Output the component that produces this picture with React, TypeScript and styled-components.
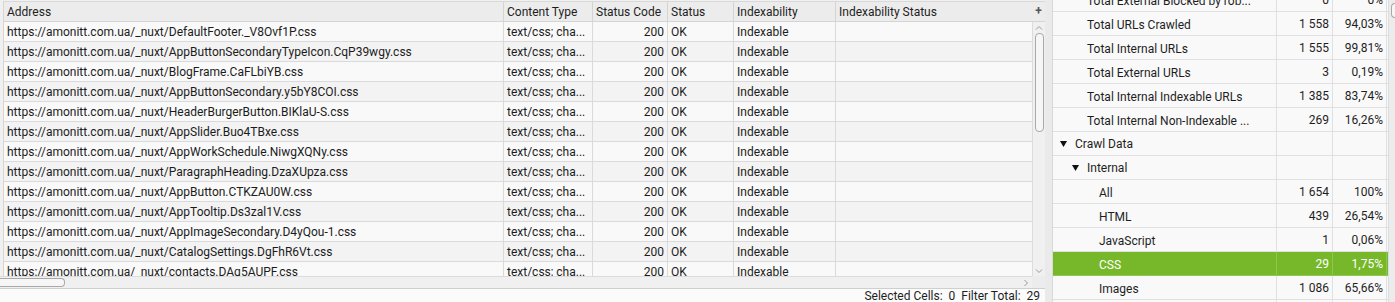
import React from "react";
import styled, { createGlobalStyle } from "styled-components";

const GlobalStyle = createGlobalStyle`
  html, body {
    margin: 0;
    padding: 0;
    background: #f0f0f0;
    font-family: Roboto, "Liberation Sans", sans-serif;
    font-size: 12px;
    color: #1c1c1c;
  }
`;

const urls = [
  "DefaultFooter._V8Ovf1P.css",
  "AppButtonSecondaryTypeIcon.CqP39wgy.css",
  "BlogFrame.CaFLbiYB.css",
  "AppButtonSecondary.y5bY8COI.css",
  "HeaderBurgerButton.BIKlaU-S.css",
  "AppSlider.Buo4TBxe.css",
  "AppWorkSchedule.NiwgXQNy.css",
  "ParagraphHeading.DzaXUpza.css",
  "AppButton.CTKZAU0W.css",
  "AppTooltip.Ds3zal1V.css",
  "AppImageSecondary.D4yQou-1.css",
  "CatalogSettings.DgFhR6Vt.css",
  "contacts.DAq5AUPF.css",
];

const columns = [
  { title: "Address", width: 500 },
  { title: "Content Type", width: 89 },
  { title: "Status Code", width: 75 },
  { title: "Status", width: 66 },
  { title: "Indexability", width: 102 },
  { title: "Indexability Status", width: 197 },
];

const gridTemplate = columns.map((c) => c.width + "px").join(" ");

type Overview = {
  label: string;
  count?: string;
  pct?: string;
  level: number;
  group?: boolean;
  selected?: boolean;
};

const overview: Overview[] = [
  { label: "Total External Blocked by rob...", count: "0", pct: "0%", level: 2 },
  { label: "Total URLs Crawled", count: "1 558", pct: "94,03%", level: 2 },
  { label: "Total Internal URLs", count: "1 555", pct: "99,81%", level: 2 },
  { label: "Total External URLs", count: "3", pct: "0,19%", level: 2 },
  { label: "Total Internal Indexable URLs", count: "1 385", pct: "83,74%", level: 2 },
  { label: "Total Internal Non-Indexable ...", count: "269", pct: "16,26%", level: 2 },
  { label: "Crawl Data", level: 0, group: true },
  { label: "Internal", level: 1, group: true },
  { label: "All", count: "1 654", pct: "100%", level: 3 },
  { label: "HTML", count: "439", pct: "26,54%", level: 3 },
  { label: "JavaScript", count: "1", pct: "0,06%", level: 3 },
  { label: "CSS", count: "29", pct: "1,75%", level: 3, selected: true },
  { label: "Images", count: "1 086", pct: "65,66%", level: 3 },
  { label: "", level: 3 },
];

export default function App() {
  return (
    <>
      <GlobalStyle />
      <Screen>
        <LeftPanel>
          <TableArea>
            <Grid>
              <HeaderRow>
                {columns.map((c) => (
                  <HeaderCell key={c.title}>{c.title}</HeaderCell>
                ))}
              </HeaderRow>
              <Body>
                {urls.map((u, i) => (
                  <Row key={u} $alt={i % 2 === 1}>
                    <Cell>https://amonitt.com.ua/_nuxt/{u}</Cell>
                    <Cell>text/css; cha...</Cell>
                    <Cell $right>200</Cell>
                    <Cell>OK</Cell>
                    <Cell>Indexable</Cell>
                    <Cell />
                  </Row>
                ))}
              </Body>
            </Grid>
            <VScroll>
              <PlusCell>+</PlusCell>
              <VTrack>
                <Chevron viewBox="0 0 8 5">
                  <polyline points="1,4.5 4,1.5 7,4.5" />
                </Chevron>
                <VThumb />
                <Spacer />
                <Chevron viewBox="0 0 8 5">
                  <polyline points="1,0.5 4,3.5 7,0.5" />
                </Chevron>
              </VTrack>
            </VScroll>
          </TableArea>
          <HScrollRow>
            <HTrack>
              <HThumb />
              <Spacer />
              <SideChevron viewBox="0 0 5 8">
                <polyline points="0.5,1 3.5,4 0.5,7" />
              </SideChevron>
            </HTrack>
            <Corner />
          </HScrollRow>
          <StatusBar>
            <span>Selected Cells:&nbsp; 0</span>
            <span>Filter Total:&nbsp; 29</span>
          </StatusBar>
        </LeftPanel>
        <Divider />
        <RightPanel>
          <OverviewList>
            {overview.map((r, i) => (
              <OvRow key={i} $selected={r.selected}>
                <OvLabel $level={r.level}>
                  {r.group && (
                    <Caret viewBox="0 0 7 6">
                      <polygon points="0,0 7,0 3.5,6" />
                    </Caret>
                  )}
                  {r.label}
                </OvLabel>
                <OvNum>{r.count}</OvNum>
                <OvNum>{r.pct}</OvNum>
              </OvRow>
            ))}
          </OverviewList>
          <RScroll>
            <RThumb />
          </RScroll>
        </RightPanel>
      </Screen>
    </>
  );
}

const Screen = styled.div`
  display: flex;
  width: 1395px;
  height: 302px;
  overflow: hidden;
`;

const LeftPanel = styled.div`
  width: 1045px;
  display: flex;
  flex-direction: column;
  background: #f0f0f0;
`;

const TableArea = styled.div`
  display: flex;
  height: 276px;
  padding-left: 3px;
  padding-top: 1px;
  box-sizing: border-box;
`;

const Grid = styled.div`
  width: 1029px;
  display: flex;
  flex-direction: column;
  overflow: hidden;
  border-left: 1px solid #d6d6d6;
`;

const HeaderRow = styled.div`
  display: grid;
  grid-template-columns: ${gridTemplate};
  height: 21px;
  box-sizing: border-box;
  flex: none;
  background: #ececec;
  border-top: 1px solid #d9d9d9;
  border-bottom: 1px solid #d4d4d4;
`;

const HeaderCell = styled.div`
  padding: 1px 3px 0;
  line-height: 19px;
  color: #1e1e1e;
  border-right: 1px solid #d4d4d4;
  white-space: nowrap;
  overflow: hidden;
`;

const Body = styled.div`
  flex: 1;
  overflow: hidden;
`;

const Row = styled.div<{ $alt: boolean }>`
  display: grid;
  grid-template-columns: ${gridTemplate};
  height: 20px;
  box-sizing: border-box;
  background: ${(p) => (p.$alt ? "#f3f3f3" : "#f9f9f9")};
  border-bottom: 1px solid #dadada;
`;

const Cell = styled.div<{ $right?: boolean }>`
  padding: 1px 3px 0;
  line-height: 19px;
  white-space: nowrap;
  overflow: hidden;
  text-align: ${(p) => (p.$right ? "right" : "left")};
  border-right: 1px solid #dadada;
`;

const VScroll = styled.div`
  width: 13px;
  display: flex;
  flex-direction: column;
  background: #ececec;
`;

const PlusCell = styled.div`
  height: 21px;
  box-sizing: border-box;
  flex: none;
  text-align: center;
  line-height: 18px;
  font-weight: 700;
  font-size: 12px;
  color: #555;
  border-top: 1px solid #d9d9d9;
  border-bottom: 1px solid #d4d4d4;
  background: #ececec;
`;

const VTrack = styled.div`
  flex: 1;
  display: flex;
  flex-direction: column;
  align-items: center;
  padding: 3px 0 2px;
  border-left: 1px solid #dcdcdc;
  background: #f0f0f0;
`;

const Chevron = styled.svg`
  width: 8px;
  height: 5px;
  flex: none;
  fill: none;
  stroke: #9a9a9a;
  stroke-width: 1;
`;

const SideChevron = styled.svg`
  width: 5px;
  height: 8px;
  flex: none;
  fill: none;
  stroke: #9a9a9a;
  stroke-width: 1;
  margin-right: 3px;
`;

const VThumb = styled.div`
  width: 9px;
  height: 99px;
  margin-top: 3px;
  box-sizing: border-box;
  border: 1px solid #a9a9a9;
  border-radius: 4px;
  background: #f6f6f6;
`;

const Spacer = styled.div`
  flex: 1;
`;

const HScrollRow = styled.div`
  display: flex;
  height: 13px;
  border-bottom: 1px solid #cfcfcf;
`;

const HTrack = styled.div`
  width: 1032px;
  display: flex;
  align-items: center;
  background: #f0f0f0;
  border-top: 1px solid #dcdcdc;
`;

const HThumb = styled.div`
  width: 65px;
  height: 9px;
  box-sizing: border-box;
  border: 1px solid #a9a9a9;
  border-left: none;
  border-radius: 0 4px 4px 0;
  background: #f6f6f6;
`;

const Corner = styled.div`
  flex: 1;
  background: #ececec;
`;

const StatusBar = styled.div`
  flex: 1;
  display: flex;
  justify-content: flex-end;
  align-items: center;
  gap: 6px;
  padding-right: 5px;
  padding-top: 1px;
  background: #fbfbfb;
  color: #1e1e1e;
  font-size: 12px;
  line-height: 12px;
`;

const Divider = styled.div`
  width: 7px;
  background: #eaeaea;
`;

const RightPanel = styled.div`
  flex: 1;
  display: flex;
  overflow: hidden;
  border-left: 1px solid #d9d9d9;
`;

const OverviewList = styled.div`
  width: 335px;
  margin-top: -12px;
  background: #f9f9f9;
`;

const OvRow = styled.div<{ $selected?: boolean }>`
  display: grid;
  grid-template-columns: 224px 56px 54px;
  height: 24px;
  box-sizing: border-box;
  border-bottom: 1px solid ${(p) => (p.$selected ? "#8cc653" : "#e0e0e0")};
  background: ${(p) => (p.$selected ? "#76b82a" : "#f9f9f9")};
  color: ${(p) => (p.$selected ? "#ffffff" : "#1e1e1e")};

  > div {
    border-right: 1px solid ${(p) => (p.$selected ? "#8cc653" : "#e0e0e0")};
  }
`;

const OvLabel = styled.div<{ $level: number }>`
  display: flex;
  align-items: center;
  padding-left: ${(p) => [7, 19, 34, 46][p.$level]}px;
  padding-top: 1px;
  white-space: nowrap;
  overflow: hidden;
`;

const Caret = styled.svg`
  width: 7px;
  height: 6px;
  fill: #111;
  margin-right: 8px;
  flex: none;
`;

const OvNum = styled.div`
  text-align: right;
  padding: 1px 3px 0 0;
  line-height: 23px;
  white-space: nowrap;
`;

const RScroll = styled.div`
  flex: 1;
  background: #ececec;
  border-left: 1px solid #dcdcdc;
  padding: 3px 0 0 2px;
`;

const RThumb = styled.div`
  height: 15px;
  box-sizing: border-box;
  border: 1px solid #a9a9a9;
  border-right: none;
  border-radius: 4px 0 0 4px;
  background: #f6f6f6;
`;
